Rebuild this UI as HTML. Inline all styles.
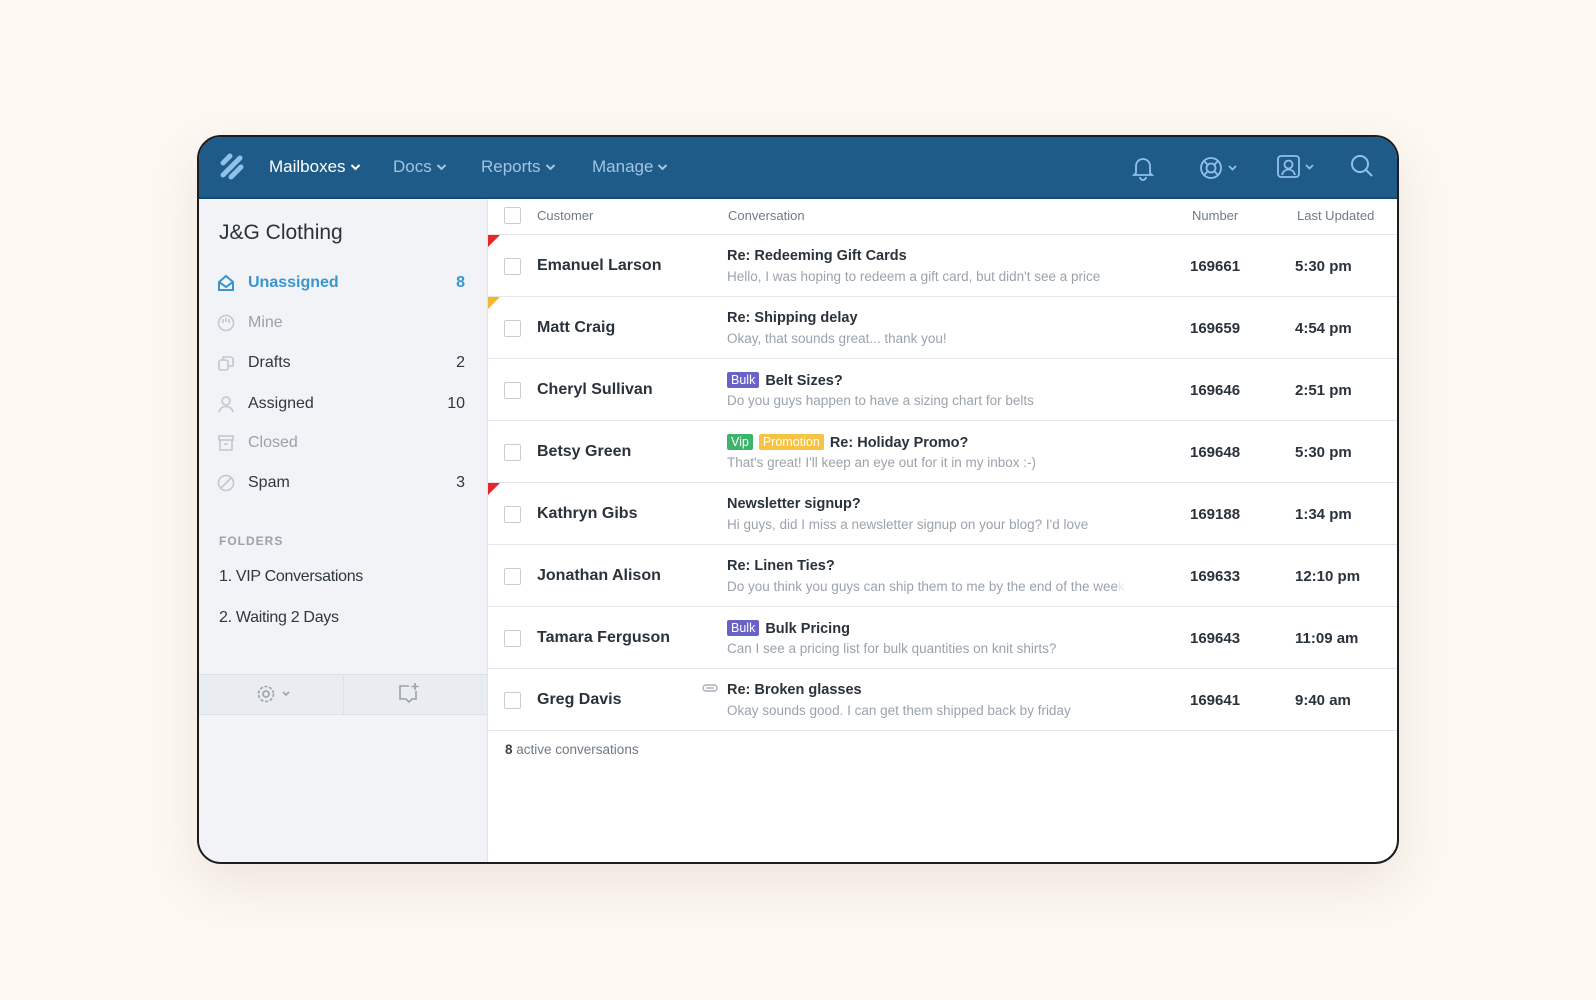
<!DOCTYPE html>
<html><head><meta charset="utf-8"><style>
*{box-sizing:border-box;margin:0;padding:0}
body{width:1596px;height:1000px;background:#fdf8f2;font-family:"Liberation Sans",sans-serif;position:relative;overflow:hidden}
.card{position:absolute;left:197px;top:135px;width:1202px;height:729px;border:2px solid #1d1d1f;border-radius:24px;overflow:hidden;background:#fff;box-shadow:0 20px 50px rgba(120,100,80,.12)}
.hdr{position:absolute;left:0;top:0;right:0;height:62px;background:#1f5b88;border-bottom:2px solid #174a70}
.a{position:absolute;white-space:nowrap}
.nav{color:#9fc4e4;font-size:17px;top:20px}
.nav svg{margin-left:4px;vertical-align:1px}
.side{position:absolute;left:0;top:62px;width:289px;bottom:0;background:#f1f3f6;border-right:1px solid #e1e4e8}
.si{position:absolute;left:49px;font-size:16px;color:#2f3740;transform:translateY(-50%)}
.sc{position:absolute;right:22px;font-size:16px;color:#2f3740;transform:translateY(-50%)}
.ic{position:absolute;left:18px;transform:translateY(-50%)}
.th{position:absolute;top:12px;font-size:13px;color:#6f7a86}
.row{position:absolute;left:289px;right:0;height:62px;border-bottom:1px solid #e4e7ea}
.cb{position:absolute;left:16px;top:23px;width:17px;height:17px;border:1.5px solid #c9ced4;border-radius:2px;background:#fff}
.nm{position:absolute;left:49px;top:22px;font-size:16px;font-weight:bold;color:#2a323b}
.sb{position:absolute;left:239px;top:13px;font-size:14.5px;font-weight:bold;color:#2a323b;white-space:nowrap}
.pv{position:absolute;left:239px;top:34px;font-size:13.5px;color:#9aa3ad;white-space:nowrap}
.num{position:absolute;left:702px;top:23px;font-size:15px;font-weight:bold;color:#2a323b}
.tm{position:absolute;left:807px;top:23px;font-size:15px;font-weight:bold;color:#2a323b}
.tag{display:inline-block;color:#fff;font-size:12.5px;font-weight:normal;padding:1px 4px;border-radius:2px;margin-right:6px;vertical-align:1px}
.flag{position:absolute;left:0;top:0;width:0;height:0;border-top:12px solid #e8262a;border-right:12px solid transparent}
</style></head><body>
<div class="card">
 <div class="hdr">
  <svg class="a" style="left:20px;top:15px" width="26" height="28" viewBox="0 0 26 28"><g stroke="#8fc0ea" stroke-width="5" stroke-linecap="round"><line x1="4" y1="11" x2="11" y2="4"/><line x1="4" y1="23" x2="21" y2="6"/><line x1="12" y1="25" x2="22" y2="15"/></g></svg>
  <div class="a nav" style="left:70px;color:#fff">Mailboxes<svg width="11" height="8" viewBox="0 0 11 8" fill="none" stroke="#fff" stroke-width="2"><path d="M1.5 2l4 4 4-4"/></svg></div>
  <div class="a nav" style="left:194px">Docs<svg width="11" height="8" viewBox="0 0 11 8" fill="none" stroke="#9fc4e4" stroke-width="2"><path d="M1.5 2l4 4 4-4"/></svg></div>
  <div class="a nav" style="left:282px">Reports<svg width="11" height="8" viewBox="0 0 11 8" fill="none" stroke="#9fc4e4" stroke-width="2"><path d="M1.5 2l4 4 4-4"/></svg></div>
  <div class="a nav" style="left:393px">Manage<svg width="11" height="8" viewBox="0 0 11 8" fill="none" stroke="#9fc4e4" stroke-width="2"><path d="M1.5 2l4 4 4-4"/></svg></div>
  <svg class="a" style="left:932px;top:18px" width="24" height="26" viewBox="0 0 24 26" fill="none" stroke="#8fc0ea" stroke-width="1.8"><path d="M5 18V11a7 7 0 0114 0v7l2 2H3z"/><path d="M9 22a3 3 0 006 0"/></svg>
  <svg class="a" style="left:1000px;top:18px" width="42" height="26" viewBox="0 0 42 26" fill="none" stroke="#8fc0ea" stroke-width="1.8"><circle cx="12" cy="13" r="10"/><circle cx="12" cy="13" r="4.5"/><path d="M5 6l4 4M19 6l-4 4M5 20l4-4M19 20l-4-4"/><path d="M30 11l3.5 3.5L37 11"/></svg>
  <svg class="a" style="left:1077px;top:17px" width="42" height="26" viewBox="0 0 42 26" fill="none" stroke="#8fc0ea" stroke-width="1.8"><rect x="2" y="2" width="21" height="21" rx="3"/><circle cx="12.5" cy="10.5" r="4"/><path d="M6 21c1-4 4-5.5 6.5-5.5s5.5 1.5 6.5 5.5"/><path d="M30 11l3.5 3.5L37 11"/></svg>
  <svg class="a" style="left:1151px;top:17px" width="24" height="26" viewBox="0 0 24 26" fill="none" stroke="#8fc0ea" stroke-width="2"><circle cx="10" cy="10" r="8"/><path d="M16 16l6 6"/></svg>
 </div>
 <div class="side">
  <div class="a" style="left:20px;top:22px;font-size:21px;color:#2a323b">J&amp;G Clothing</div>
  <svg class="ic" style="top:84px" width="18" height="18" viewBox="0 0 18 18" fill="none" stroke="#3d95d0" stroke-width="2"><path d="M2 8l7-6 7 6v8H2z"/><path d="M2 8l7 5 7-5"/></svg>
  <div class="si" style="top:84px;color:#3d95d0;font-weight:bold">Unassigned</div><div class="sc" style="top:84px;color:#3d95d0;font-weight:bold">8</div>
  <svg class="ic" style="top:124px" width="18" height="18" viewBox="0 0 18 18" fill="none" stroke="#c3c8ce" stroke-width="1.6"><circle cx="9" cy="9" r="7.5"/><path d="M6 9V5M9 8V4M12 9V5"/></svg>
  <div class="si" style="top:124px;color:#9aa2ab">Mine</div>
  <svg class="ic" style="top:164px" width="18" height="18" viewBox="0 0 18 18" fill="none" stroke="#c3c8ce" stroke-width="1.6"><rect x="2" y="6" width="9" height="10" rx="2"/><path d="M6 6V3h8a2 2 0 012 2v7h-5"/></svg>
  <div class="si" style="top:164px">Drafts</div><div class="sc" style="top:164px">2</div>
  <svg class="ic" style="top:205px" width="18" height="18" viewBox="0 0 18 18" fill="none" stroke="#c3c8ce" stroke-width="1.6"><circle cx="9" cy="6" r="4"/><path d="M2 17c1-4 4-5.5 7-5.5s6 1.5 7 5.5"/></svg>
  <div class="si" style="top:205px">Assigned</div><div class="sc" style="top:205px">10</div>
  <svg class="ic" style="top:244px" width="18" height="18" viewBox="0 0 18 18" fill="none" stroke="#c3c8ce" stroke-width="1.6"><rect x="2" y="2" width="14" height="4"/><path d="M3 6v10h12V6M7 10h4"/></svg>
  <div class="si" style="top:244px;color:#9aa2ab">Closed</div>
  <svg class="ic" style="top:284px" width="18" height="18" viewBox="0 0 18 18" fill="none" stroke="#c3c8ce" stroke-width="1.6"><circle cx="9" cy="9" r="7.5"/><path d="M4 14L14 4"/></svg>
  <div class="si" style="top:284px">Spam</div><div class="sc" style="top:284px">3</div>
  <div class="a" style="left:20px;top:335px;font-size:12px;color:#9aa2ab;letter-spacing:1px;font-weight:bold">FOLDERS</div>
  <div class="a" style="left:20px;top:369px;font-size:16px;color:#2f3740;letter-spacing:-.3px">1. VIP Conversations</div>
  <div class="a" style="left:20px;top:410px;font-size:16px;color:#2f3740;letter-spacing:-.3px">2. Waiting 2 Days</div>
  <div class="a" style="left:0;top:475px;width:288px;height:41px;background:#e9ecf0;border-top:1px solid #dde1e5;border-bottom:1px solid #dde1e5"></div>
  <div class="a" style="left:144px;top:476px;width:1px;height:39px;background:#dde1e5"></div>
  <svg class="a" style="left:57px;top:485px" width="40" height="20" viewBox="0 0 40 20" fill="none" stroke="#9aa2ab" stroke-width="1.6"><circle cx="10" cy="10" r="3"/><circle cx="10" cy="10" r="7.5" stroke-dasharray="3 1.8"/><path d="M27 8l3 3 3-3"/></svg>
  <svg class="a" style="left:198px;top:482px" width="24" height="24" viewBox="0 0 24 24" fill="none" stroke="#9aa2ab" stroke-width="1.6"><path d="M12 5H3v13h6l3 3 3-3h4v-8"/><path d="M18 2v7M14.5 5.5h7"/></svg>
 </div>
 <div class="a" style="left:289px;top:62px;right:0;height:36px;border-bottom:1px solid #e4e7ea"></div>
 <div class="a" style="left:305px;top:70px;width:17px;height:17px;border:1.5px solid #c9ced4;border-radius:2px"></div>
 <div class="th" style="left:338px;top:71px">Customer</div>
 <div class="th" style="left:529px;top:71px">Conversation</div>
 <div class="th" style="left:993px;top:71px">Number</div>
 <div class="th" style="left:1098px;top:71px">Last Updated</div>

 <div class="row" style="top:98px"><div class="flag"></div><div class="cb"></div><div class="nm">Emanuel Larson</div><div class="sb">Re: Redeeming Gift Cards</div><div class="pv">Hello, I was hoping to redeem a gift card, but didn't see a price</div><div class="num">169661</div><div class="tm">5:30 pm</div></div>
 <div class="row" style="top:160px"><div class="flag" style="border-top-color:#f5b62a"></div><div class="cb"></div><div class="nm">Matt Craig</div><div class="sb">Re: Shipping delay</div><div class="pv">Okay, that sounds great... thank you!</div><div class="num">169659</div><div class="tm">4:54 pm</div></div>
 <div class="row" style="top:222px"><div class="cb"></div><div class="nm">Cheryl Sullivan</div><div class="sb"><span class="tag" style="background:#6a62c7">Bulk</span>Belt Sizes?</div><div class="pv">Do you guys happen to have a sizing chart for belts</div><div class="num">169646</div><div class="tm">2:51 pm</div></div>
 <div class="row" style="top:284px"><div class="cb"></div><div class="nm">Betsy Green</div><div class="sb"><span class="tag" style="background:#3cb56a">Vip</span><span class="tag" style="background:#f6c342">Promotion</span>Re: Holiday Promo?</div><div class="pv">That's great! I'll keep an eye out for it in my inbox :-)</div><div class="num">169648</div><div class="tm">5:30 pm</div></div>
 <div class="row" style="top:346px"><div class="flag"></div><div class="cb"></div><div class="nm">Kathryn Gibs</div><div class="sb">Newsletter signup?</div><div class="pv">Hi guys, did I miss a newsletter signup on your blog? I'd love</div><div class="num">169188</div><div class="tm">1:34 pm</div></div>
 <div class="row" style="top:408px"><div class="cb"></div><div class="nm">Jonathan Alison</div><div class="sb">Re: Linen Ties?</div><div class="pv">Do you think you guys can ship them to me by the end of the wee<span style="color:#e4e7ea">k</span></div><div class="num">169633</div><div class="tm">12:10 pm</div></div>
 <div class="row" style="top:470px"><div class="cb"></div><div class="nm">Tamara Ferguson</div><div class="sb"><span class="tag" style="background:#6a62c7">Bulk</span>Bulk Pricing</div><div class="pv">Can I see a pricing list for bulk quantities on knit shirts?</div><div class="num">169643</div><div class="tm">11:09 am</div></div>
 <div class="row" style="top:532px"><div class="cb"></div><div class="nm">Greg Davis</div><svg class="a" style="left:214px;top:14px" width="16" height="10" viewBox="0 0 16 10" fill="none" stroke="#a9b0b8" stroke-width="1.4"><rect x="1" y="2" width="14" height="6" rx="3"/><path d="M4 5h8"/></svg><div class="sb">Re: Broken glasses</div><div class="pv">Okay sounds good. I can get them shipped back by friday</div><div class="num">169641</div><div class="tm">9:40 am</div></div>
 <div class="a" style="left:306px;top:605px;font-size:13.5px;color:#6f7a86"><b style="color:#3a434c">8</b> active conversations</div>
</div>
</body></html>
